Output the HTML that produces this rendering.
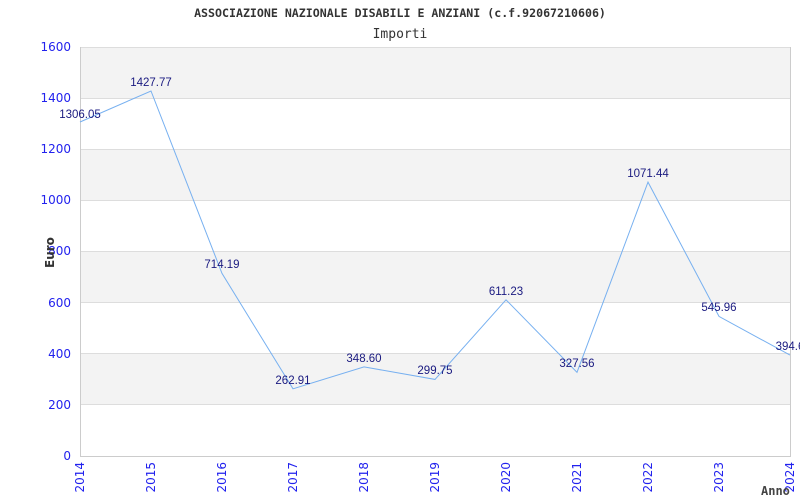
<!DOCTYPE html>
<html><head><style>body{margin:0;background:#fff}svg{display:block}</style></head><body>
<svg width="800" height="500" xmlns="http://www.w3.org/2000/svg">
<rect width="800" height="500" fill="#fff"/>
<text x="400" y="17" text-anchor="middle" font-family="DejaVu Sans Mono" font-weight="bold" font-size="11.6" fill="#333">ASSOCIAZIONE NAZIONALE DISABILI E ANZIANI (c.f.92067210606)</text>
<text x="400" y="38" text-anchor="middle" font-family="DejaVu Sans Mono" font-size="13" fill="#333">Importi</text>
<g fill="#f3f3f3">
<rect x="80" y="47" width="710" height="51"/>
<rect x="80" y="149" width="710" height="51"/>
<rect x="80" y="251" width="710" height="52"/>
<rect x="80" y="354" width="710" height="51"/>
</g>
<g stroke="#dddddd" stroke-width="1">
<line x1="80" y1="47.5" x2="790" y2="47.5"/>
<line x1="80" y1="98.5" x2="790" y2="98.5"/>
<line x1="80" y1="149.5" x2="790" y2="149.5"/>
<line x1="80" y1="200.5" x2="790" y2="200.5"/>
<line x1="80" y1="251.5" x2="790" y2="251.5"/>
<line x1="80" y1="302.5" x2="790" y2="302.5"/>
<line x1="80" y1="353.5" x2="790" y2="353.5"/>
<line x1="80" y1="404.5" x2="790" y2="404.5"/>
<line x1="80" y1="456.5" x2="790" y2="456.5" stroke="#ccc"/>
<line x1="80.5" y1="47" x2="80.5" y2="457" stroke="#ccc"/>
<line x1="790.5" y1="47" x2="790.5" y2="457" stroke="#ccc"/>
</g>
<g font-family="DejaVu Sans" font-size="12" fill="#2222ee" text-anchor="end">
<text x="71" y="51">1600</text><text x="71" y="102">1400</text><text x="71" y="153">1200</text>
<text x="71" y="204">1000</text><text x="71" y="255">800</text><text x="71" y="307">600</text>
<text x="71" y="358">400</text><text x="71" y="409">200</text><text x="71" y="460">0</text>
</g>
<g font-family="DejaVu Sans" font-size="12" fill="#2222ee" text-anchor="end">
<text transform="translate(84,462) rotate(-90)">2014</text>
<text transform="translate(155,462) rotate(-90)">2015</text>
<text transform="translate(226,462) rotate(-90)">2016</text>
<text transform="translate(297,462) rotate(-90)">2017</text>
<text transform="translate(368,462) rotate(-90)">2018</text>
<text transform="translate(439,462) rotate(-90)">2019</text>
<text transform="translate(510,462) rotate(-90)">2020</text>
<text transform="translate(581,462) rotate(-90)">2021</text>
<text transform="translate(652,462) rotate(-90)">2022</text>
<text transform="translate(723,462) rotate(-90)">2023</text>
<text transform="translate(794,462) rotate(-90)">2024</text>
</g>
<text x="761" y="495" font-family="DejaVu Sans Mono" font-weight="bold" font-size="12" fill="#444">Anno</text>
<text transform="translate(54,268) rotate(-90)" font-family="DejaVu Sans" font-weight="bold" font-size="12" fill="#333">Euro</text>
<polyline fill="none" stroke="#77b0f0" stroke-width="1" points="80,122 151,91 222,273.4 293,388.8 364,366.9 435,379.4 506,299.8 577,372.3 648,182.1 719,316.4 790,355.1"/>
<g font-family="Liberation Sans" font-size="11.5" fill="#1a1a80" text-anchor="middle">
<text x="80" y="118">1306.05</text>
<text x="151" y="86">1427.77</text>
<text x="222" y="268">714.19</text>
<text x="293" y="384">262.91</text>
<text x="364" y="362">348.60</text>
<text x="435" y="374">299.75</text>
<text x="506" y="295">611.23</text>
<text x="577" y="367">327.56</text>
<text x="648" y="177">1071.44</text>
<text x="719" y="311">545.96</text>
<text x="790" y="350">394.6</text>
</g>
</svg>
</body></html>
